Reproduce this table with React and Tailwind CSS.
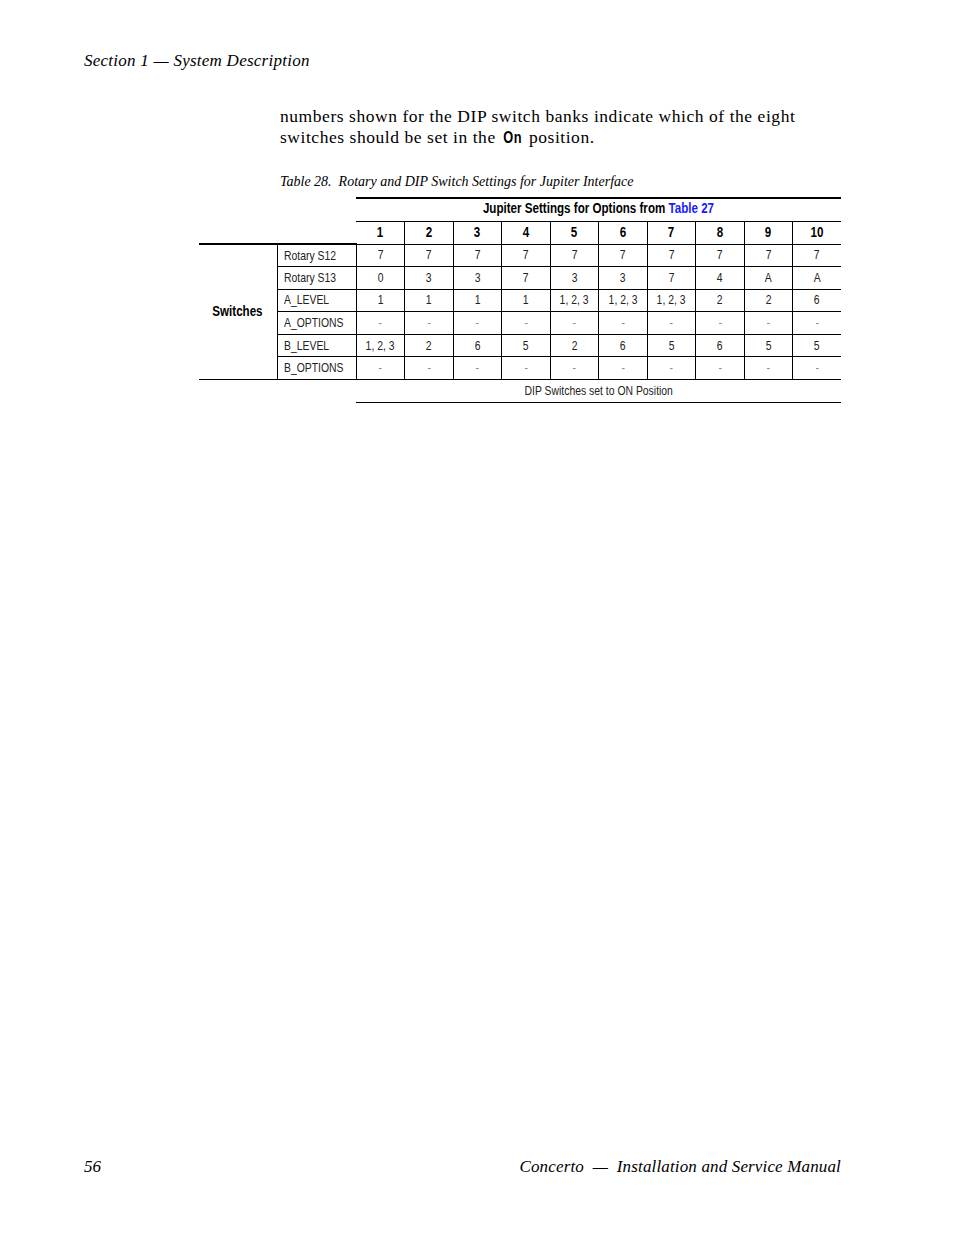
import React from 'react';

const serif = { fontFamily: '"Liberation Serif", serif' };
const sans = { fontFamily: '"Liberation Sans", Arial, sans-serif' };

const columns = ['1', '2', '3', '4', '5', '6', '7', '8', '9', '10'];

const rows = [
  { label: 'Rotary S12', values: ['7', '7', '7', '7', '7', '7', '7', '7', '7', '7'] },
  { label: 'Rotary S13', values: ['0', '3', '3', '7', '3', '3', '7', '4', 'A', 'A'] },
  { label: 'A_LEVEL', values: ['1', '1', '1', '1', '1, 2, 3', '1, 2, 3', '1, 2, 3', '2', '2', '6'] },
  { label: 'A_OPTIONS', values: ['-', '-', '-', '-', '-', '-', '-', '-', '-', '-'] },
  { label: 'B_LEVEL', values: ['1, 2, 3', '2', '6', '5', '2', '6', '5', '6', '5', '5'] },
  { label: 'B_OPTIONS', values: ['-', '-', '-', '-', '-', '-', '-', '-', '-', '-'] },
];

// condensed look: Arial-width font squeezed horizontally
const Cn = ({ left, children }) => (
  <span className={`inline-block whitespace-nowrap scale-x-[0.8] ${left ? 'origin-left' : 'origin-center'}`}>
    {children}
  </span>
);

const SettingsTable = () => (
  <table className="table-fixed border-collapse w-[642px] text-[13px] text-black" style={sans}>
    <colgroup>
      <col className="w-[78px]" />
      <col className="w-[79px]" />
      {columns.map((c) => (
        <col key={c} className="w-[48.5px]" />
      ))}
    </colgroup>
    <tbody>
      <tr className="h-[23px]">
        <td className="p-0" />
        <td className="p-0" />
        <td colSpan={10} className="p-0 pb-[3px] border-t-2 border-b border-black text-center font-bold text-[14.5px] leading-none">
          <Cn>
            Jupiter Settings for Options from <span className="text-[#1a1aff]">Table 27</span>
          </Cn>
        </td>
      </tr>
      <tr className="h-[23px]">
        <td className="p-0" />
        <td className="p-0" />
        {columns.map((c, i) => (
          <td
            key={c}
            className={`p-0 pb-[1px] border-b border-black text-center font-bold text-[14.5px] leading-none ${i > 0 ? 'border-l' : ''}`}
          >
            <Cn>{c}</Cn>
          </td>
        ))}
      </tr>
      {rows.map((r, ri) => (
        <tr key={r.label} className="h-[22.6px]">
          {ri === 0 && (
            <td rowSpan={6} className="p-0 border-t-2 border-b border-r border-black text-center font-bold text-[14.5px]">
              <Cn>Switches</Cn>
            </td>
          )}
          <td className={`p-0 pl-[6px] pb-[1px] border-b border-r border-black leading-none text-[#222] ${ri === 0 ? 'border-t-2' : ''}`}>
            <Cn left>{r.label}</Cn>
          </td>
          {r.values.map((v, vi) => (
            <td
              key={vi}
              className={`p-0 pb-[1px] border-b border-black text-center leading-none ${vi < 9 ? 'border-r' : ''} ${v === '-' ? 'text-[#888]' : 'text-[#222]'}`}
            >
              <Cn>{v}</Cn>
            </td>
          ))}
        </tr>
      ))}
      <tr className="h-[23px]">
        <td className="p-0" />
        <td className="p-0" />
        <td colSpan={10} className="p-0 pb-[2px] border-b border-black text-center leading-none text-[#222]">
          <Cn>DIP Switches set to ON Position</Cn>
        </td>
      </tr>
    </tbody>
  </table>
);

export default function App() {
  return (
    <div className="w-[954px] min-h-[1235px] bg-white flex flex-col pl-[84px] pr-[113px] text-black" style={serif}>
      <div className="pt-[50px] italic text-[17px] leading-[22px] tracking-[0.25px]">Section 1 — System Description</div>

      <p className="ml-[196px] mt-[34px] text-[17.5px] leading-[21px] tracking-[0.55px]">
        numbers shown for the DIP switch banks indicate which of the eight
        <br />
        switches should be set in the{' '}
        <span className="inline-block font-bold text-[16px] scale-x-[0.8]" style={sans}>
          On
        </span>{' '}
        position.
      </p>

      <div className="ml-[196px] mt-[25px] italic text-[14px] leading-[18px]">
        Table 28.&nbsp; Rotary and DIP Switch Settings for Jupiter Interface
      </div>

      <div className="ml-[115px] mt-[6px]">
        <SettingsTable />
      </div>

      <div className="mt-auto mb-[57px] flex justify-between italic text-[17px] leading-[22px]">
        <span>56</span>
        <span className="tracking-[0.15px]">Concerto&nbsp; —&nbsp; Installation and Service Manual</span>
      </div>
    </div>
  );
}
